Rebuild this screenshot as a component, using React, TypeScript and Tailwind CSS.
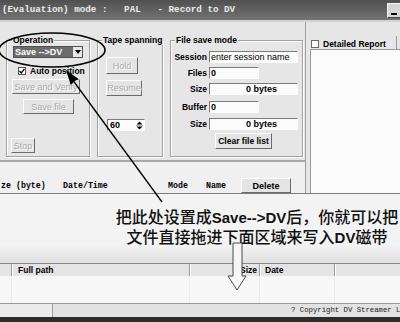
import React from "react";

const sunken = "bg-[#fbfbfb] border border-t-[#7a7a7a] border-l-[#7a7a7a] border-b-[#ffffff] border-r-[#ffffff]";
const raised = "bg-[#e4e4e4] border border-t-[#ffffff] border-l-[#ffffff] border-b-[#6a6a6a] border-r-[#6a6a6a]";
const disabledTxt = "text-[#a9a9a9] [text-shadow:1px_1px_0_#ffffff]";
const groupBox = "flex flex-col border border-[#a2a2a2] shadow-[inset_1px_1px_0_#ffffff,1px_1px_0_#ffffff]";
const legend = "-mt-[6px] w-fit px-[1px] bg-[#e6e6e6] font-bold text-[8.5px] leading-[10px] whitespace-nowrap";

function Field({ label, wide, value, right, bold }: { label: string; wide?: boolean; value: string; right?: boolean; bold?: boolean }) {
  return (
    <div className="flex items-center h-[12px]">
      <span className="w-[36px] text-right font-bold text-[8.5px] leading-[10px]">{label}</span>
      <div
        className={`ml-[2px] h-[12px] ${wide ? "w-[89px]" : "w-[50px]"} ${sunken} flex items-center ${right ? "justify-end pr-[20px]" : "pl-[1px]"} text-[9px] leading-[10px] ${bold ? "font-bold" : ""} whitespace-nowrap`}
      >
        {value}
      </div>
    </div>
  );
}

export default function App() {
  return (
    <div className="relative w-[400px] h-[322px] overflow-hidden bg-[#e6e6e6] font-['Liberation_Sans',sans-serif] text-black">
      {/* Title bar */}
      <div className="h-[20px] flex items-center justify-between bg-gradient-to-b from-[#505050] to-[#747474]">
        <span className="pl-[2px] font-['Liberation_Mono',monospace] font-bold text-[9.25px] leading-[12px] text-[#ececec] whitespace-pre">
          (Evaluation) mode :   PAL   - Record to DV
        </span>
        <div className="w-[14px] h-[15px] -mr-[1px] mt-[1px] bg-[#d6d6d6] border border-t-[#f6f6f6] border-l-[#f6f6f6] border-b-[#4a4a4a] border-r-[#4a4a4a] flex items-end justify-center pb-[2px]">
          <div className="w-[6px] h-[2px] bg-black" />
        </div>
      </div>

      {/* Main area */}
      <div className="h-[174px] flex border-t-2 border-t-[#d2d2d2] border-b border-b-[#7c7c7c]">
        {/* Left panel */}
        <div className="w-[306px] shrink-0 flex flex-col border-r border-r-[#a0a0a0]">
          <div className="mt-[18px] h-[117px] flex pl-[6px] gap-[7px]">
            {/* Operation */}
            <div className={`w-[84px] ${groupBox}`}>
              <div className={`${legend} ml-[5px]`}>Operation</div>
              <div className="ml-[6px] mt-[1px] w-[70px] h-[12px] flex border border-[#505050]">
                <div className="flex-1 bg-[#6c6c6c] text-white font-bold text-[9px] leading-[10px] pl-[1px] flex items-center whitespace-nowrap">
                  Save --&gt;DV
                </div>
                <div className="w-[9px] bg-[#e8e8e8] flex items-center justify-center">
                  <svg width="6" height="4" viewBox="0 0 6 4"><path d="M0 0H6L3 4Z" fill="#000" /></svg>
                </div>
              </div>
              <div className="ml-[11px] mt-[8px] flex items-center h-[9px]">
                <div className="w-[8px] h-[8px] bg-white border border-[#555] flex items-center justify-center">
                  <svg width="6" height="6" viewBox="0 0 6 6"><path d="M0.5 3 L2.3 5 L5.5 0.8" stroke="#000" strokeWidth="1.3" fill="none" /></svg>
                </div>
                <span className="ml-[4px] font-bold text-[8.5px] leading-[10px] whitespace-nowrap">Auto position</span>
              </div>
              <div className={`ml-[5px] mt-[4px] w-[68px] h-[15px] ${raised} flex items-center justify-center text-[9px] leading-[10px] whitespace-nowrap ${disabledTxt}`}>
                Save and Verify
              </div>
              <div className={`ml-[16px] mt-[5px] w-[51px] h-[15px] ${raised} flex items-center justify-center text-[9px] leading-[10px] ${disabledTxt}`}>
                Save file
              </div>
              <div className={`ml-[4px] mt-[24px] w-[24px] h-[15px] ${raised} flex items-center justify-center text-[9px] leading-[10px] ${disabledTxt}`}>
                Stop
              </div>
            </div>

            {/* Tape spanning */}
            <div className={`w-[66px] ${groupBox}`}>
              <div className={`${legend} ml-[4px]`}>Tape spanning</div>
              <div className={`ml-[8px] mt-[12px] w-[32px] h-[17px] ${raised} flex items-center justify-center text-[9px] leading-[10px] ${disabledTxt}`}>
                Hold
              </div>
              <div className={`ml-[8px] mt-[6px] w-[36px] h-[16px] ${raised} flex items-center justify-center text-[9px] leading-[10px] ${disabledTxt}`}>
                Resume
              </div>
              <div className={`ml-[9px] mt-[23px] w-[38px] h-[12px] ${sunken} flex items-center justify-between pl-[2px] pr-[1px]`}>
                <span className="font-bold text-[9px] leading-[10px]">60</span>
                <svg width="7" height="9" viewBox="0 0 7 9">
                  <path d="M3.5 0.5L6.5 3.5H0.5Z" fill="#000" />
                  <path d="M0.5 5.5H6.5L3.5 8.5Z" fill="#000" />
                  <path d="M0 4.5H7" stroke="#888" strokeWidth="0.6" />
                </svg>
              </div>
            </div>

            {/* File save mode */}
            <div className={`w-[133px] ${groupBox}`}>
              <div className={`${legend} ml-[4px]`}>File save mode</div>
              <div className="mt-[6px]">
                <Field label="Session" wide value="enter session name" />
              </div>
              <div className="mt-[4px]">
                <Field label="Files" value="0" bold />
              </div>
              <div className="mt-[4px]">
                <Field label="Size" wide value="0 bytes" right bold />
              </div>
              <div className="mt-[6px]">
                <Field label="Buffer" value="0" bold />
              </div>
              <div className="mt-[5px]">
                <Field label="Size" wide value="0 bytes" right bold />
              </div>
              <div className={`ml-[44px] mt-[3px] w-[57px] h-[16px] ${raised} flex items-center justify-center font-bold text-[8.5px] leading-[10px] whitespace-nowrap`}>
                Clear file list
              </div>
            </div>
          </div>

          {/* list header strip */}
          <div className="mt-[3px] flex-1 bg-[#f0f0f0] border-t-2 border-t-[#a8a8a8] flex items-end font-['Liberation_Mono',monospace] font-bold text-[8.3px] leading-[10px] whitespace-nowrap">
            <span className="w-[63px] pl-[1px] mb-[2px]">ze (byte)</span>
            <span className="w-[105px] mb-[2px]">Date/Time</span>
            <span className="w-[38px] mb-[2px]">Mode</span>
            <span className="w-[35px] mb-[2px]">Name</span>
            <div className={`w-[50px] h-[15px] ${raised} flex items-center justify-center font-['Liberation_Sans',sans-serif] font-bold text-[9px]`}>
              Delete
            </div>
          </div>
        </div>

        {/* Right panel */}
        <div className="flex-1 min-w-0 flex flex-col">
          <div className="mt-[16px] h-[11px] flex items-center pl-[5px]">
            <div className="w-[8px] h-[8px] bg-white border border-[#6a6a6a]" />
            <span className="ml-[4px] font-bold text-[8.5px] leading-[10px] whitespace-nowrap">Detailed Report</span>
            <div className="ml-auto mr-[3px] w-[1px] h-[13px] bg-[#9a9a9a] self-end" />
          </div>
          <div className="ml-[4px] flex-1 bg-[#fbfbfb] border-l border-t border-[#9a9a9a]" />
        </div>
      </div>

      {/* Annotation area */}
      <div className="h-[69px] flex flex-col bg-[#f3f3f3]">
        <div className="h-[51px] pl-[114px] pt-[13px] text-center font-['Noto_Sans_CJK_SC',sans-serif] font-medium text-[16px] leading-[18px] text-[#111] whitespace-nowrap">
          <div>
            把此处设置成<span className="font-['Liberation_Sans',sans-serif] font-bold text-[15px]">Save--&gt;DV</span>后，你就可以把
          </div>
          <div>
            文件直接拖进下面区域来写入<span className="font-['Liberation_Sans',sans-serif] font-bold text-[15px]">DV</span>磁带
          </div>
        </div>
        <div className="flex-1 bg-gradient-to-b from-[#f3f3f3] to-[#e0e0e0]" />
      </div>

      {/* Lower list header */}
      <div className="h-[13px] flex bg-[#e4e4e4] border-t border-t-[#8a8a8a] font-bold text-[8.5px] leading-[10px] whitespace-nowrap">
        <div className="w-[12px] shrink-0 border-r border-r-[#9a9a9a]" />
        <div className="w-[178px] shrink-0 border-r border-r-[#9a9a9a] border-l border-l-white pl-[5px] flex items-center">Full path</div>
        <div className="w-[70px] shrink-0 border-r border-r-[#9a9a9a] border-l border-l-white pr-[2px] flex items-center justify-end">Size</div>
        <div className="w-[75px] shrink-0 border-r border-r-[#9a9a9a] border-l border-l-white pl-[4px] flex items-center">Date</div>
        <div className="flex-1 border-l border-l-white" />
      </div>

      {/* List body */}
      <div className="h-[27px] flex bg-[#f7f7f7]">
        <div className="w-[12px] shrink-0 border-r border-r-[#ececec]" />
        <div className="w-[178px] shrink-0 border-r border-r-[#ececec]" />
        <div className="w-[70px] shrink-0 border-r border-r-[#ececec]" />
        <div className="w-[75px] shrink-0 border-r border-r-[#ececec]" />
        <div className="flex-1" />
      </div>

      {/* Status bar */}
      <div className="h-[14px] flex border-t border-t-[#9a9a9a] bg-[#e2e2e2]">
        <div className="w-[53px] shrink-0 bg-[#ececec] border-r border-r-[#a0a0a0]" />
        <div className="flex-1 min-w-0 overflow-hidden flex items-center pl-[238px] font-['Liberation_Mono',monospace] text-[7.3px] leading-[9px] whitespace-nowrap text-[#222]">
          ? Copyright DV Streamer Ltd
        </div>
      </div>
      <div className="h-[5px] bg-[#2c2c2c]" />

      {/* Overlay drawings */}
      <svg className="absolute left-0 top-0 pointer-events-none" width="400" height="322" viewBox="0 0 400 322">
        <ellipse cx="52" cy="50" rx="53" ry="17" fill="none" stroke="#000" strokeWidth="1.6" />
        <line x1="72" y1="79" x2="162" y2="202" stroke="#000" strokeWidth="1.3" />
        <path d="M66 70 L78.9 79.2 L74.5 81 L70.8 85.1 Z" fill="#000" />
        <path
          d="M233 243 H242 V276 H246 L237 290 L228 276 H233 Z"
          fill="#f6f6f6"
          stroke="#4a4a4a"
          strokeWidth="1"
        />
      </svg>
    </div>
  );
}
